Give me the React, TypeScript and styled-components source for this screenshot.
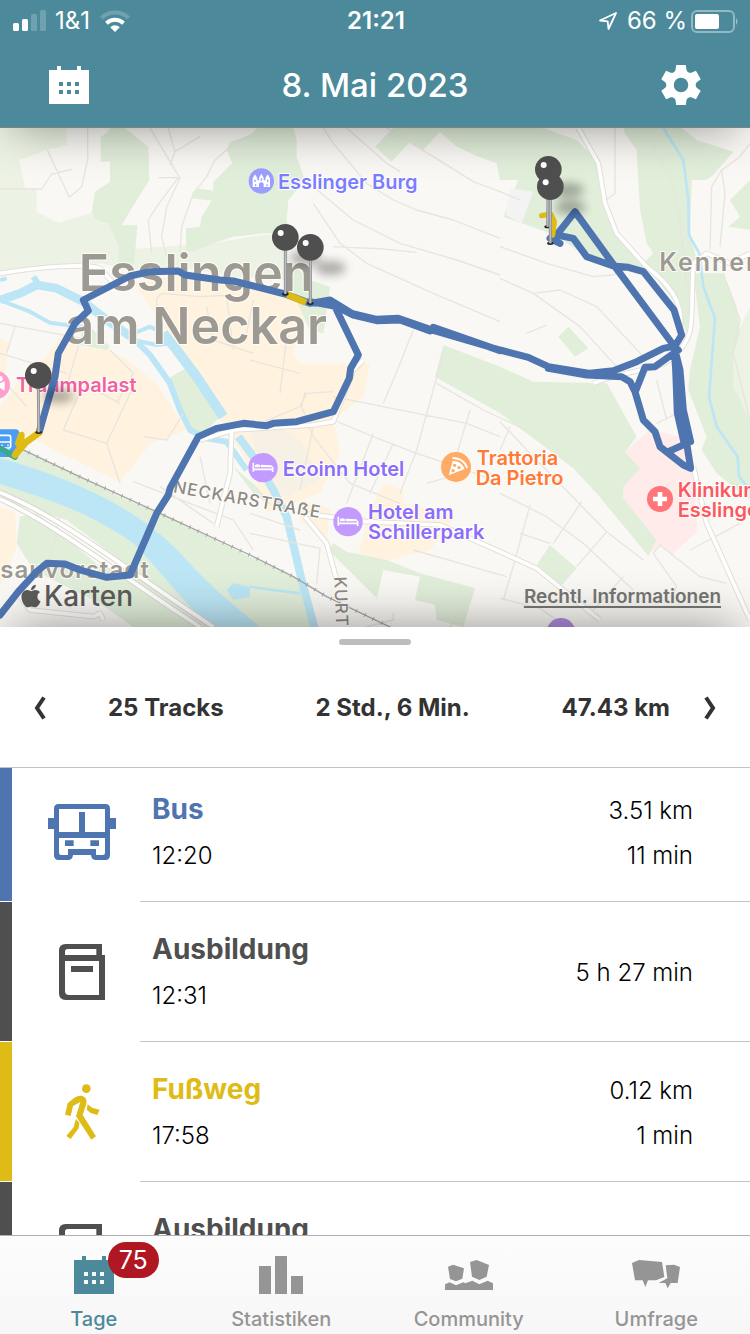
import React, { useLayoutEffect, useRef } from 'react';
import styled, { createGlobalStyle } from 'styled-components';
import { FaApple } from 'react-icons/fa';

const teal = '#4c8a9b';
const blue = '#4f75b1';
const yellow = '#dfbb16';
const charcoal = '#4f4f4f';

const GlobalStyle = createGlobalStyle`
  * { box-sizing: border-box; }
  body {
    margin: 0;
    background: #fff;
    font-family: Inter, "Liberation Sans", sans-serif;
  }
  button { font: inherit; color: inherit; background: none; border: 0; padding: 0; cursor: pointer; }
  svg { display: block; }
`;

const Screen = styled.div`
  display: flex;
  flex-direction: column;
  height: 100vh;
  min-height: 900px;
  overflow: hidden;
`;

const Header = styled.header`
  position: relative;
  z-index: 1;
  flex: none;
  color: #fff;
  background: ${teal};
  border-bottom: 1px solid #84807a;
  box-shadow: 0 10px 48px -12px rgba(0, 0, 0, 0.45);
`;

const StatusBar = styled.div`
  display: grid;
  grid-template-columns: 1fr auto 1fr;
  align-items: center;
  height: 42px;
  padding: 0 11px 0 13px;
  font-size: 24px;
  line-height: 42px;
`;

const StatusGroup = styled.div<{ $end?: boolean }>`
  display: flex;
  align-items: center;
  justify-content: ${(p) => (p.$end ? 'flex-end' : 'flex-start')};
  gap: ${(p) => (p.$end ? 4 : 9)}px;
`;

const Clock = styled.time`
  font-weight: 600;
`;

const NavBar = styled.div`
  display: flex;
  align-items: center;
  justify-content: space-between;
  height: 85px;
  padding: 0 48px;
`;

const NavButton = styled.button`
  display: flex;
  align-items: center;
  justify-content: center;
  width: 42px;
  height: 48px;
`;

const Title = styled.h1`
  margin: 0;
  font-size: 33px;
  line-height: 40px;
  font-weight: 500;
`;

const MapArea = styled.main`
  position: relative;
  flex: none;
  height: 499px;
  overflow: hidden;
  background: #f9f8f4;
`;

const MapDrawing = styled.svg`
  width: 100%;
  height: 100%;
  font-family: Inter, "Liberation Sans", sans-serif;
`;

const MapCredit = styled.div`
  position: absolute;
  left: 18px;
  bottom: 15px;
  display: flex;
  align-items: center;
  font-size: 28px;
  line-height: 32px;
  font-weight: 500;
  color: #5c5c5a;
`;

const LegalLink = styled.a`
  position: absolute;
  right: 29px;
  bottom: 18px;
  font-size: 19px;
  line-height: 24px;
  font-weight: 600;
  color: #767672;
  text-decoration: underline;
  text-decoration-thickness: 2px;
  text-underline-offset: 3px;
`;

const Sheet = styled.section`
  position: relative;
  display: flex;
  flex: 1;
  flex-direction: column;
  min-height: 0;
  background: #fff;
  box-shadow: 0 -10px 48px -12px rgba(0, 0, 0, 0.45);
`;

const Handle = styled.div`
  flex: none;
  align-self: center;
  width: 72px;
  height: 6px;
  margin-top: 12px;
  border-radius: 3px;
  background: #bdbdbd;
`;

const Summary = styled.div`
  display: flex;
  flex: none;
  align-items: center;
  height: 123px;
  padding-top: 4px;
  border-bottom: 1px solid #c4c4c6;
  color: #333;
`;

const StepButton = styled.button`
  display: flex;
  align-items: center;
  justify-content: center;
  width: 80px;
  height: 80px;
`;

const Totals = styled.div`
  display: flex;
  flex: 1;
  justify-content: space-between;
  padding-left: 28px;
  font-size: 24px;
  line-height: 32px;
  font-weight: 700;
`;

const TrackList = styled.ul`
  flex: 1;
  min-height: 0;
  margin: 0;
  padding: 0;
  overflow-y: auto;
  scrollbar-width: none;
  list-style: none;
`;

const Track = styled.li`
  display: flex;
  height: 140px;
`;

const TrackStripe = styled.div<{ $color: string }>`
  width: 12px;
  margin-bottom: 1px;
  background: ${(p) => p.$color};
`;

const TrackIcon = styled.div<{ $color: string }>`
  display: flex;
  align-items: center;
  justify-content: center;
  width: 128px;
  padding-left: 12px;
  color: ${(p) => p.$color};
`;

const TrackBody = styled.div`
  display: flex;
  flex: 1;
  align-items: center;
  justify-content: space-between;
  padding: 2px 57px 0 12px;
  border-bottom: 1px solid #c4c4c6;
  font-size: 24px;
  font-weight: 300;
  color: #000;
`;

const TrackText = styled.div`
  line-height: 48px;
`;

const TrackName = styled.h2<{ $color: string }>`
  margin: 0;
  font-size: 28px;
  line-height: 46px;
  font-weight: 700;
  color: ${(p) => p.$color};
`;

const TrackFigures = styled.div`
  display: flex;
  flex-direction: column;
  line-height: 45px;
  text-align: right;
`;

const TabBar = styled.nav`
  position: relative;
  display: grid;
  flex: none;
  grid-template-columns: repeat(4, 1fr);
  height: 99px;
  border-top: 1px solid #b0b0b2;
  background: linear-gradient(#fcfcfc, #f7f7f7);
`;

const Tab = styled.button<{ $active?: boolean }>`
  display: flex;
  flex-direction: column;
  align-items: center;
  padding-top: 20px;
  font-size: 20px;
  line-height: 24px;
  font-weight: 500;
  color: ${(p) => (p.$active ? teal : '#959595')};
`;

const TabIcon = styled.span`
  position: relative;
  display: block;
  height: 51px;
`;

const Badge = styled.span`
  position: absolute;
  left: 34px;
  top: -14px;
  width: 51px;
  border-radius: 18px;
  background: #b01722;
  color: #fff;
  font-size: 25px;
  line-height: 36px;
  font-weight: 400;
  text-align: center;
`;

const CalendarIcon = () => (
  <svg width="40" height="38" viewBox="0 0 40 38" fill="currentColor">
    <path
      fillRule="evenodd"
      d="M8 0h4v4h16V0h4v4h8v34H0V4h8zM10 16v4h4v-4zM18 16v4h4v-4zM26 16v4h4v-4zM10 24v4h4v-4zM18 24v4h4v-4zM26 24v4h4v-4z"
    />
  </svg>
);

const GearIcon = () => (
  <svg width="42" height="42" viewBox="-21 -21 42 42" fill="#fff">
    {[0, 60, 120, 180, 240, 300].map((a) => (
      <path key={a} d="M-7-12-5.500-15-4.800-20H4.800L5.500-15 7-12z" transform={`rotate(${a})`} />
    ))}
    <circle r="11" fill="none" stroke="#fff" strokeWidth="7.500" />
  </svg>
);

const SignalIcon = () => (
  <svg width="33" height="22" viewBox="0 0 33 22" fill="#fff">
    <rect x="0" y="13" width="6" height="8" rx="1.500" />
    <rect x="9" y="9" width="6" height="12" rx="1.500" />
    <rect x="18" y="4" width="6" height="17" rx="1.500" opacity=".2" />
    <rect x="27" y="0" width="6" height="21" rx="1.500" opacity=".2" />
  </svg>
);

const WifiIcon = () => (
  <svg width="32" height="22" viewBox="-16 -22 32 22" fill="none" stroke="#fff" strokeWidth="4">
    <path d="M-13.500-14a19.500 19.500 0 0 1 27 0" opacity=".2" />
    <path d="M-8.500-8.800a12.300 12.300 0 0 1 17 0" />
    <path d="M0 0-4.800-4.800a7 7 0 0 1 9.600 0z" fill="#fff" stroke="none" />
  </svg>
);

const LocationIcon = () => (
  <svg width="24" height="18" viewBox="0 0 24 18" fill="none" stroke="#fff" strokeWidth="1.800" strokeLinejoin="round">
    <path d="M1 8.500 17 1 9.500 17 8.700 9.300z" />
  </svg>
);

const BatteryIcon = () => (
  <svg width="48" height="23" viewBox="0 0 48 23">
    <rect x="1" y="1" width="42" height="21" rx="5" fill="none" stroke="#fff" strokeWidth="2" opacity=".4" />
    <rect x="4" y="4" width="24" height="15" rx="2" fill="#fff" />
    <path d="M45 8q3 3.500 0 7z" fill="#fff" opacity=".45" />
  </svg>
);

const Chevron = ({ flip }: { flip?: boolean }) => (
  <svg width="12" height="24" viewBox="0 0 12 24" fill="none" stroke="currentColor" strokeWidth="4">
    <path d={flip ? 'M2 1.500 9 12 2 22.500' : 'M10 1.500 3 12 10 22.500'} />
  </svg>
);

const BusIcon = () => (
  <svg width="68" height="56" viewBox="144 432 204 168" fill="currentColor">
    <path
      fillRule="evenodd"
      d="M176 432H316Q330 432 330 446V586Q330 600 316 600H288Q274 600 273 585H219Q218 600 204 600H176Q162 600 162 586V446Q162 432 176 432ZM177 447V516H237V456H255V516H315V447ZM177 534V578Q177 585 184 585H204V567H288V585H308Q315 585 315 578V534Z"
    />
    <path d="M195 541h26v17h-26zM271 541h26v17h-26zM144 474h20v33h-20zM328 474h20v33h-20z" />
  </svg>
);

const BookIcon = () => (
  <svg width="46" height="56" viewBox="177 852 138 168" fill="currentColor">
    <path
      fillRule="evenodd"
      d="M197 852H306V885H315V1020H197Q177 1020 177 1000V872Q177 852 197 852ZM203 867Q195 867 195 875V885H289V867ZM195 903V993Q195 1005 207 1005H297V903Z"
    />
    <path d="M213 918h66v18h-66z" />
  </svg>
);

const WalkIcon = () => (
  <svg width="35" height="56" viewBox="195 250 105 168" fill="currentColor">
    <circle cx="259" cy="264" r="13" />
    <path d="M195 342 203 308 222 292Q240 281 252 288 262 295 259 309L248 343 288 407 274 417 228 347 241 304 219 316 212 346Z" />
    <path d="M263 311 278 322 299 327 292 343 272 337 260 327Z" />
    <path d="M228 355 238 367 236 383 212 415 199 406 222 378 224 368Z" />
  </svg>
);

const StatsIcon = () => (
  <svg width="44" height="38" viewBox="0 0 44 38" fill="currentColor">
    <path d="M0 10h12v28H0zM16 0h12v38H16zM32 20h12v18H32z" />
  </svg>
);

const CommunityIcon = () => (
  <svg width="48" height="38" viewBox="207 288 144 114" fill="currentColor">
    <path d="M216 320 231 314 264 325 259 356 240 364 222 357ZM282 306 302 300 339 315 332 350 310 360 288 350ZM207 373 221 367 240 376 262 367 268 370 289 362 310 373 335 362 351 370V390H207Z" />
  </svg>
);

const SurveyIcon = () => (
  <svg width="48" height="38" viewBox="771 288 144 114" fill="currentColor">
    <path d="M771 309 792 300 861 306 868 351 843 361H819L811 381 803 361H780ZM872 316 897 314 915 321 908 369H887L878 385 871 369H851L877 355Z" />
  </svg>
);

const greens = [
  'M320 40 330 24H375L445 80 448 180 395 265 365 316H412L402 436 355 440 358 385 325 310 290 300 275 280 285 215 330 185V125H302V50Z',
  'M575 397 558 392V325L600 320 605 290 635 242 575 235 590 205 640 212V185L697 130 680 90 690 66 750 45 770 24H880L890 60V110L915 180 865 240 860 300 870 340 790 340 700 350 640 370Z',
  'M1125 80 1180 24H1630L1730 60 1790 120 1810 240 1845 330 1930 430 1960 480 1890 440 1760 410 1665 345 1510 290 1555 180H1500L1490 130 1430 108 1370 80 1320 35 1270 90 1230 65 1175 125Z',
  'M1875 40 1910 90 1920 270 1940 370 1960 400 1930 430 2020 540 2060 640 2090 420 2070 340 2075 180 2120 180 2140 165 2200 95 2090 60 2045 24H1870Z',
  'M2080 460 2170 460 2210 560 2220 640 2200 700 2200 800 2250 900V1140L2150 1060 2105 990 2120 950 2065 810 2070 750 2100 620Z',
  'M2190 240 2250 180V330L2185 320 2220 290Z',
  'M1705 620 1765 685 1725 710 1675 650Z',
  'M1330 675 1500 740 1600 785 1820 790 1910 950 1875 995 1920 1045 1870 1110V1135L1970 1260 1945 1307 1790 1120 1720 1045 1500 880 1305 770Z',
  'M1650 1275 1730 1345 1685 1395 1610 1335Z',
  'M1000 1270 1040 1295 1160 1320 1260 1360 1425 1405 1390 1521 1310 1500 1305 1455 1245 1440 1260 1370 1150 1350 1130 1435 985 1290Z',
  'M0 995 60 985 380 1140 460 1170 750 1310 900 1380 940 1521H600L400 1350 200 1200 0 1140Z',
  'M60 1190 110 1180 300 1340 400 1350 560 1450 640 1521H400L300 1450 100 1350 50 1270Z',
  'M250 600 330 680 320 690 240 675ZM500 780 530 760 560 745 660 890 600 950 550 900Z',
  'M860 420 930 480 990 500 970 640 930 630 880 520ZM700 1040 770 1100 820 1160 760 1120Z',
];

const lightGreens = [
  'M0 24H200V75L140 90 58 120 75 205H110V275L175 308 270 280 330 300 370 400 350 440 300 430 170 435 0 455Z',
  'M350 390 640 370 750 350 860 340 870 480 700 470 540 440 360 450Z',
  'M2160 750 2250 560V950L2170 900Z',
];

const creams = [
  'M400 490 560 462 750 505 900 545 960 570 900 620 880 700 900 730 1110 730 1090 830 1000 900 1020 1000 960 1120 800 1180 760 1060 700 960 620 830 560 720 500 640 480 600Z',
  'M190 640 240 680 330 690 380 720 470 790 540 900 560 930 450 970 420 1010 360 1085 160 990 90 950 0 925V860L60 780 130 720Z',
  'M0 655 30 665 15 760 0 770ZM0 1160 45 1175 50 1280 0 1400Z',
  'M1110 1170 1150 1090 1210 1110 1210 1150 1365 1190 1290 1290 1150 1325 1075 1300 1090 1250ZM900 1140 990 1165 980 1270 900 1200Z',
];

const lanes =
  'M0 207H125L155 162 215 148M142 90 208 232 245 200 263 120V24M450 24 540 175 500 260 485 350 500 410M505 24 525 95 600 50M525 95 510 135M475 173H535L470 260 445 300 455 400M750 45 690 80 645 120 620 170 580 220 545 320 540 400M970 24 1000 70 1100 190 1180 240 1250 270 1360 300 1500 355M940 200 1060 300 1200 370 1370 420 1500 465M940 250 1020 370 1100 430 1300 520 1500 605M1000 380 1150 387 1250 397M1160 24 1300 110 1420 185 1500 215 1560 240M1040 24 1160 130 1200 155M470 570V535L485 520 600 530 700 525M0 700 100 730 200 760M0 770 80 860M45 620 20 700M0 610 245 655M240 660 200 800M500 560 480 620M1500 380 1640 430 1780 470 1840 465 1900 420M1500 475 1600 520 1740 620 1850 740M1600 520 1680 510 1790 560 1930 710M1580 640 1640 615M1845 24V220L1820 240M1950 60 2020 200 2040 300 2060 500M2130 390 2135 200 2165 150 2220 110 2250 70M2165 150 2175 220 2160 380M2170 460 2220 600 2200 700 2250 900M1240 630 1180 780 1150 850M1330 700 1250 990 1200 1120M1000 830 1400 910 1500 950M1000 900 1120 950 1250 1000 1400 1050 1500 1090M1120 940 1040 1150M1180 970 1110 1120M1410 870 1350 1070 1280 1090M1310 790 1450 870 1600 940M1500 905 1600 1010 1820 1235 1930 1320M1530 920 1500 990M1500 1120 1640 1190 1750 1270 1900 1410M1745 1145 1660 1270M1820 1235 1730 1340M1590 1155 1545 1320 1510 1440M1560 1240 1650 1270M1500 1435 1620 1465 1700 1521M1870 1370 1780 1470M1960 1300 1980 1275 2100 1370 2180 1390M1960 1300 2030 1400 2020 1420M2070 1290 2220 1210M2000 900 1970 780M1970 910 2050 870M780 910 900 860 920 820 1000 815M750 1240 960 1285 950 1390M750 1180 900 1230M915 815 905 860 940 950 1050 1090 1200 1150M940 920 900 1110M1240 1290 1520 1370M1400 1430 1350 1521M1100 1520 1180 1500 1180 1480M190 930 320 970 400 800M360 850 250 790 190 930M320 970 360 1090M550 880 500 960 430 950M180 1180 150 1330 240 1380M400 1085 700 1200 760 1290M480 1100 640 1210M600 1010 630 1150M330 690 400 760 350 850M620 560 640 660 760 700M760 540 740 640M680 530 700 690M750 720 900 760M860 650 840 820';

const highways =
  'M0 1117C200 1200 380 1350 640 1521M0 1137C180 1220 350 1360 600 1521';
const mainRoads =
  'M0 460C120 440 260 430 300 445L340 490M1735 24 1795 130 1815 250 1850 340 1940 440C2020 500 2050 560 2040 620M2250 400 2190 430 2120 400 2080 430C2070 600 2090 640 2030 700 1980 760 1900 740 1780 790M600 960 700 930 940 915 1000 905 1060 750 1090 720M695 935 690 1060 650 1220M910 1180 1100 1205 1320 1215 1500 1295 1610 1345 1800 1500M915 1190 980 1270 1010 1380M2080 1040 2120 1210 2250 1500M60 1430 90 1470 280 1490 300 1480 310 1500';
const railway = 'M60 985 250 1075 480 1180 750 1305 880 1370 980 1430 1170 1521';
const tracks =
  'M118 935 165 770 175 700 225 610 265 572 250 540 390 468 450 455 535 453 555 465 660 480 700 483 855 522 930 550 990 540 1055 580 1130 598 1195 595 1290 628 1500 690 1585 712 1645 740 1770 760 1840 752 1910 725 1990 685 2025 678 2045 645 2022 570 1930 455 1885 442 1840 438 1760 410 1720 355 1670 345 1725 275 1845 440 2020 675M930 545 1010 560 1060 585 1130 602 1200 600 1290 633M1300 622 1500 692M1650 355 1680 370M1670 340 1655 360M1645 745 1760 765 1865 770 1890 785 1905 815 1930 900 1965 935 1980 980 2050 1035 2072 1045 2060 970 2005 995M2072 965 2050 870 2040 750 2025 690M2052 968 2032 880 2027 750 2023 690M1908 810 1935 742 1965 740 2035 690M1000 550 1075 705 1052 745 1048 775 1000 875 890 905 820 910 800 917 730 910 650 925 595 950 510 1105 505 1125 470 1180 455 1215 390 1365 320 1372 240 1350 195 1332 140 1330 110 1355 55 1415 0 1485';

const pins = [
  { x: 856, y: 352, tx: 856, ty: 522 },
  { x: 931, y: 382, tx: 931, ty: 550 },
  { x: 1645, y: 148, tx: 1643, ty: 320 },
  { x: 1651, y: 200, tx: 1651, ty: 370 },
  { x: 115, y: 766, tx: 116, ty: 937 },
];

const BedGlyph = ({ x, y }: { x: number; y: number }) => (
  <g transform={`translate(${x} ${y})`}>
    <circle r="44" fill="#c39bff" />
    <path d="M-29-15V12M-29 5H29M29 13V-2" stroke="#fff" strokeWidth="5" fill="none" />
    <path d="M-24-7q8-7 15 0v6h-15zM-7-9 24-7q5 0 5 6H-7z" fill="#fff" />
  </g>
);

const CityMap = () => (
  <MapDrawing viewBox="0 24 2250 1497" preserveAspectRatio="xMidYMid slice" role="img" aria-label="Karte von Esslingen am Neckar">
    <defs>
      <filter id="soft" x="-50%" y="-50%" width="200%" height="200%">
        <feGaussianBlur stdDeviation="14" />
      </filter>
    </defs>
    <rect width="2250" height="1530" fill="#f9f8f4" />
    {lightGreens.map((d) => <path key={d} d={d} fill="#ecf3e4" />)}
    {creams.map((d) => <path key={d} d={d} fill="#fff3df" />)}
    {greens.map((d) => <path key={d} d={d} fill="#e1eeda" />)}
    <path d="M750 930 830 915 900 960 960 1080 860 1130 790 1080Z" fill="#f7f0e4" />
    <path d="M1530 205 1600 215 1565 310 1517 285Z" fill="#f3f3f3" />
    <path d="M1875 995 1950 930 2040 950 2075 1050 2090 1180V1235L2015 1305 1980 1275 1950 1300 1970 1260 1870 1135V1100L1920 1045Z" fill="#feebea" />

    <g fill="none" stroke="#bce6f5" strokeLinejoin="round">
      <path strokeWidth="12" d="M0 540 90 575 150 608 250 622M0 480 20 475M390 645 450 620 510 650M400 660 470 675 520 670" />
      <path strokeWidth="26" d="M0 540 60 520 110 495 170 505 250 545 320 600 400 655" />
      <path strokeWidth="18" d="M100 470 120 500M400 655 450 705 510 790 540 870 570 930 620 955 680 965 740 1050" />
      <path strokeWidth="30" d="M490 640 530 690 590 770 670 890" />
      <path strokeWidth="24" d="M715 950 760 1010 820 1110 860 1190 905 1380 945 1530" />
      <path strokeWidth="8" d="M1990 24 2050 120 2065 240 2067 345 2098 400 2110 500 2145 595 2127 830 2150 920 2213 1010 2217 1070 2250 1110M750 1400 820 1410 900 1420" />
    </g>
    <path d="M0 1015C200 1070 420 1160 560 1320 640 1410 720 1470 790 1530H640C560 1460 480 1350 400 1270 260 1170 120 1130 0 1092Z" fill="#bce6f5" />
    <path d="M680 1410 700 1390 750 1400V1430L700 1440Z" fill="#bce6f5" />

    <path d={lanes} fill="none" stroke="#e8e5df" strokeWidth="4" strokeLinejoin="round" />
    <g fill="none" strokeLinejoin="round">
      <path d={mainRoads} stroke="#e3e0da" strokeWidth="17" />
      <path d={mainRoads} stroke="#fff" strokeWidth="11" />
      <path d={highways} stroke="#dad6ce" strokeWidth="17" />
      <path d={highways} stroke="#fff" strokeWidth="11" />
      <path d={railway} stroke="#a5a5a3" strokeWidth="4" />
      <path d={railway} stroke="#a5a5a3" strokeWidth="12" strokeDasharray="3 25" />
    </g>

    <g fill="none" strokeLinecap="round" strokeLinejoin="round">
      <path d="M0 985 45 1010" stroke="#3aa890" strokeWidth="18" />
    </g>

    <g fill="#9d9993" stroke="#fffdf8" strokeWidth="6" paintOrder="stroke" strokeLinejoin="round" fontWeight="600">
      <text x="236" y="512" fontSize="151">Esslingen</text>
      <text x="196" y="672" fontSize="151">am Neckar</text>
      <text x="1978" y="453" fontSize="75" letterSpacing="6">Kennenburg</text>
      <text x="450" y="1374" fontSize="72" letterSpacing="3" textAnchor="end">Pliensauvorstadt</text>
      <g fontSize="51" fontWeight="500" letterSpacing="3" fill="#8d8a86">
        <text transform="translate(518 1117) rotate(10)">NECKARSTRAẞE</text>
        <text transform="translate(1003 1370) rotate(88)">KURT-</text>
      </g>
    </g>

    <g stroke="#fffefc" strokeWidth="6" paintOrder="stroke" strokeLinejoin="round" fontSize="60" fontWeight="600">
      <text x="834" y="207" fill="#7a7dff">Esslinger Burg</text>
      <text x="48" y="816" fill="#f0629f">Traumpalast</text>
      <g fill="#8b6dfb">
        <text x="848" y="1068">Ecoinn Hotel</text>
        <text x="1104" y="1197">Hotel am</text>
        <text x="1104" y="1258">Schillerpark</text>
      </g>
      <g fill="#ff7937">
        <text x="1430" y="1035">Trattoria</text>
        <text x="1427" y="1096">Da Pietro</text>
      </g>
      <g fill="#fa5961">
        <text x="2033" y="1130">Klinikum</text>
        <text x="2033" y="1191">Esslingen</text>
      </g>
    </g>

    <g transform="translate(784 183)">
      <circle r="38" fill="#9a9fff" />
      <path d="M-26 18V-8L-19-20-12-8V-2H-7V-10L0-22 7-10V-2H12V-8L19-20 26-8V18H7V8q-7-8-14 0V18Z" fill="#fff" />
      <path d="M-19-4v7M19-4v7M0-8v7M-17 10v6M17 10v6" stroke="#9a9fff" strokeWidth="4" />
    </g>
    <BedGlyph x={789} y={1043} />
    <BedGlyph x={1044} y={1205} />
    <g transform="translate(1368 1041)">
      <circle r="45" fill="#ffab66" />
      <path d="M-10-18Q14-20 26 6L-22 25Z" fill="#fff" />
      <path d="M-8-27Q22-26 33 1" fill="none" stroke="#fff" strokeWidth="6" strokeLinecap="round" />
      <circle cx="-4" cy="-5" r="5" fill="#ffab66" />
      <circle cx="9" cy="2" r="5" fill="#ffab66" />
      <circle cx="-9" cy="11" r="5" fill="#ffab66" />
    </g>
    <circle cx="1980" cy="1137" r="39" fill="#ff757a" />
    <path d="M1980 1116v42M1959 1137h42" stroke="#fff" strokeWidth="14" />
    <circle cx="-12" cy="795" r="42" fill="#ff9dcb" />
    <path d="M0 790 14 784V812L0 804ZM-8 776a8 8 0 1 0 16 0 8 8 0 1 0-16 0" fill="#fff" />
    <circle cx="1683" cy="1537" r="43" fill="#b08de0" />
    <rect x="-30" y="928" width="87" height="83" rx="10" fill="#4a9df6" />
    <rect x="-4" y="946" width="36" height="38" rx="6" fill="none" stroke="#fff" strokeWidth="5" />
    <path d="M-4 966h36M4 976h4M22 976h4M4 988v6M26 988v6" stroke="#fff" strokeWidth="5" />

    <g fill="none" strokeLinecap="round" strokeLinejoin="round">
      <path d={tracks} stroke={blue} strokeWidth="21" />
      <path d="M0 985 45 1010" stroke="#3aa890" strokeWidth="18" />
      <path d="M115 940 80 965 45 1005 62 980 64 945 55 970" stroke={yellow} strokeWidth="20" />
      <path d="M862 524 918 548" stroke={yellow} strokeWidth="20" strokeLinecap="butt" />
      <path d="M1625 287 1652 282 1663 305 1658 345" stroke={yellow} strokeWidth="16" />
    </g>

    {pins.map((p) => (
      <ellipse key={`${p.x}-${p.y}`} cx={p.x + 60} cy={p.y + 62} rx="46" ry="22" fill="#000" opacity=".3" filter="url(#soft)" />
    ))}
    {pins.map((p) => (
      <g key={`${p.x}-${p.y}`}>
        <ellipse cx={p.tx} cy={p.ty} rx="10" ry="5" fill="#222" />
        <path d={`M${p.x} ${p.y}L${p.tx} ${p.ty}`} stroke="#8f8f92" strokeWidth="9" />
        <path d={`M${p.x} ${p.y}L${p.tx} ${p.ty}`} stroke="#bcbcc0" strokeWidth="4" />
        <circle cx={p.x} cy={p.y} r="40" fill={charcoal} />
        <circle cx={p.x - 14} cy={p.y - 13} r="9" fill="#fff" />
      </g>
    ))}
  </MapDrawing>
);

type TrackEntry = {
  name: string;
  time: string;
  color: string;
  icon: React.ReactNode;
  figures: string[];
};

const entries: TrackEntry[] = [
  { name: 'Bus', time: '12:20', color: blue, icon: <BusIcon />, figures: ['3.51 km', '11 min'] },
  { name: 'Ausbildung', time: '12:31', color: charcoal, icon: <BookIcon />, figures: ['5 h 27 min'] },
  { name: 'Fußweg', time: '17:58', color: yellow, icon: <WalkIcon />, figures: ['0.12 km', '1 min'] },
  { name: 'Ausbildung', time: '', color: charcoal, icon: <BookIcon />, figures: [] },
];

export default function App() {
  const list = useRef<HTMLUListElement>(null);

  // The list opens slightly scrolled, with the first row tucked under the summary.
  useLayoutEffect(() => {
    if (list.current) list.current.scrollTop = 6;
  }, []);

  return (
    <Screen>
      <GlobalStyle />
      <Header>
        <StatusBar>
          <StatusGroup>
            <SignalIcon />
            <span>1&amp;1</span>
            <WifiIcon />
          </StatusGroup>
          <Clock>21:21</Clock>
          <StatusGroup $end>
            <LocationIcon />
            <span>66 %</span>
            <BatteryIcon />
          </StatusGroup>
        </StatusBar>
        <NavBar>
          <NavButton aria-label="Kalender">
            <CalendarIcon />
          </NavButton>
          <Title>8. Mai 2023</Title>
          <NavButton aria-label="Einstellungen">
            <GearIcon />
          </NavButton>
        </NavBar>
      </Header>

      <MapArea>
        <CityMap />
        <MapCredit>
          <FaApple size={26} />
          <span>Karten</span>
        </MapCredit>
        <LegalLink href="#rechtliches">Rechtl. Informationen</LegalLink>
      </MapArea>

      <Sheet>
        <Handle />
        <Summary>
          <StepButton aria-label="Vorheriger Tag">
            <Chevron />
          </StepButton>
          <Totals>
            <span>25 Tracks</span>
            <span>2 Std., 6 Min.</span>
            <span>47.43 km</span>
          </Totals>
          <StepButton aria-label="Nächster Tag">
            <Chevron flip />
          </StepButton>
        </Summary>
        <TrackList ref={list}>
          {entries.map((e, i) => (
            <Track key={i}>
              <TrackStripe $color={e.color} />
              <TrackIcon $color={e.color}>{e.icon}</TrackIcon>
              <TrackBody>
                <TrackText>
                  <TrackName $color={e.color}>{e.name}</TrackName>
                  <time>{e.time || '\u00a0'}</time>
                </TrackText>
                <TrackFigures>
                  {e.figures.map((f) => (
                    <span key={f}>{f}</span>
                  ))}
                </TrackFigures>
              </TrackBody>
            </Track>
          ))}
        </TrackList>
      </Sheet>

      <TabBar>
        <Tab $active>
          <TabIcon>
            <CalendarIcon />
            <Badge>75</Badge>
          </TabIcon>
          Tage
        </Tab>
        <Tab>
          <TabIcon>
            <StatsIcon />
          </TabIcon>
          Statistiken
        </Tab>
        <Tab>
          <TabIcon>
            <CommunityIcon />
          </TabIcon>
          Community
        </Tab>
        <Tab>
          <TabIcon>
            <SurveyIcon />
          </TabIcon>
          Umfrage
        </Tab>
      </TabBar>
    </Screen>
  );
}
